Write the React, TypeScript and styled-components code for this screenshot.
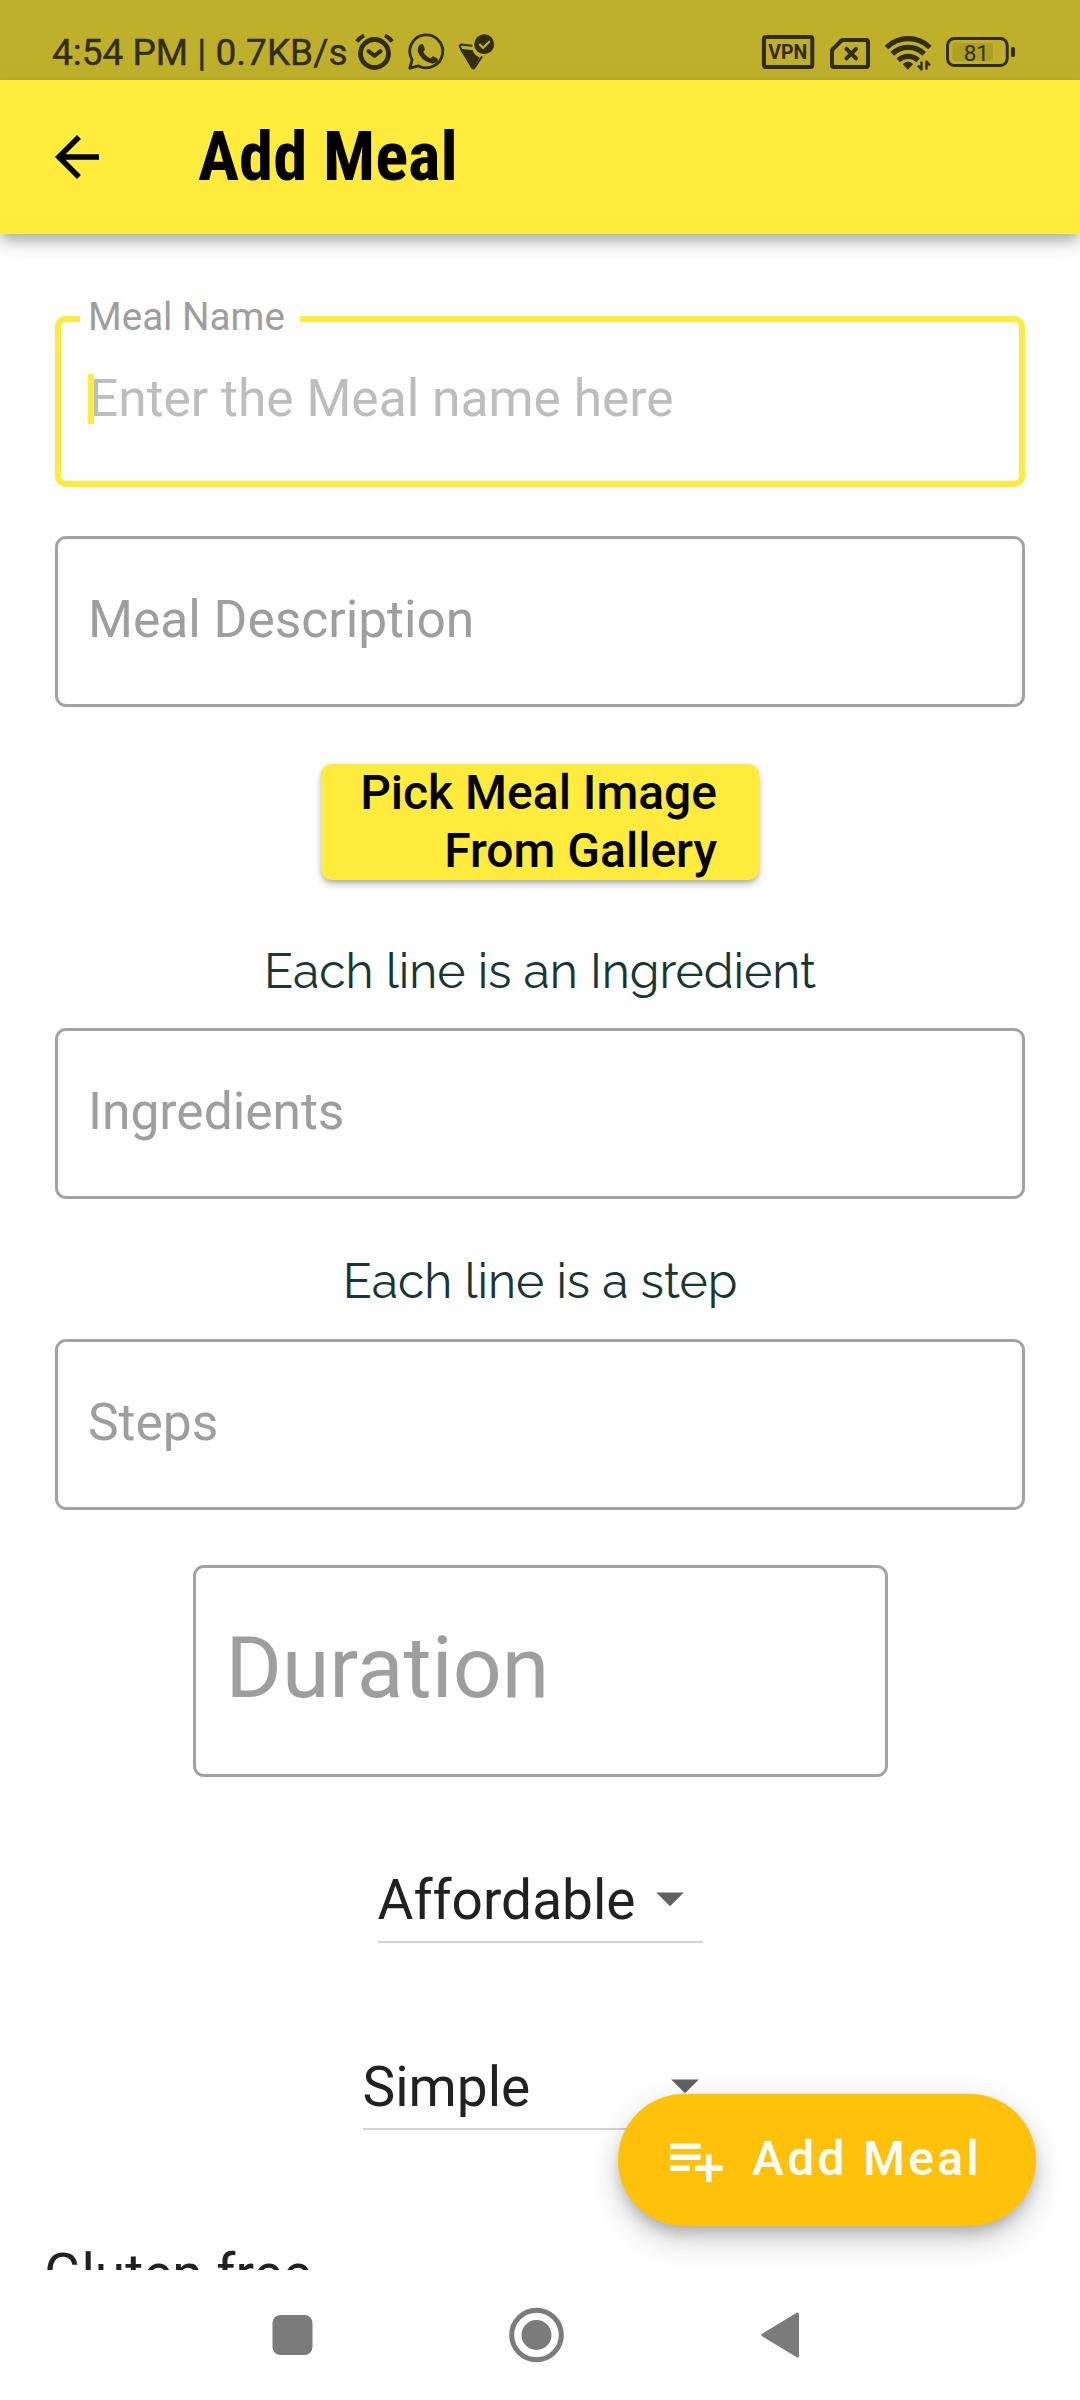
import React from "react";
import styled, { createGlobalStyle } from "styled-components";

const INK = "#322d08";

const GlobalStyle = createGlobalStyle`
  * { box-sizing: border-box; }
  body { margin: 0; background: #fefefe; font-family: Roboto, sans-serif; }
`;

const Screen = styled.div`
  width: 1080px;
  height: 2400px;
  display: flex;
  flex-direction: column;
  overflow: hidden;
  background: #fefefe;
`;

const StatusBar = styled.div`
  flex: none;
  height: 80px;
  padding: 26px 64px 0 52px;
  display: flex;
  justify-content: space-between;
  background: #bfb02c;
  color: ${INK};
`;

const StatusText = styled.span`
  width: 293px;
  font-size: 37px;
  line-height: 54px;
  font-weight: 400;
  -webkit-text-stroke: 0.4px ${INK};
  white-space: nowrap;
`;

const StatusGroup = styled.div`
  display: flex;
  height: 50px;
`;

const AppBar = styled.header`
  flex: none;
  height: 154px;
  padding: 0 44px;
  display: flex;
  align-items: center;
  gap: 88px;
  background: #ffeb3b;
  position: relative;
  z-index: 1;
  box-shadow: 0 5.5px 11px -2.75px rgba(0, 0, 0, 0.2), 0 11px 14px rgba(0, 0, 0, 0.14),
    0 2.75px 27px rgba(0, 0, 0, 0.06);
`;

const Title = styled.h1`
  margin: 0;
  font-family: "Roboto Condensed", Roboto, sans-serif;
  font-stretch: 75%;
  font-size: 68.75px;
  line-height: 80px;
  font-weight: 700;
  color: #000;
  white-space: nowrap;
`;

const Body = styled.main`
  flex: none;
  height: 2036px;
  overflow: hidden;
  display: flex;
  flex-direction: column;
  align-items: center;
  padding: 82px 55px 0;
`;

const Field = styled.div<{ $focused?: boolean; $gap?: number }>`
  flex: none;
  width: 970px;
  height: 171px;
  margin-top: ${(p) => p.$gap ?? 0}px;
  padding: ${(p) => (p.$focused ? "46px 28px" : "50px 30px")};
  border: ${(p) => (p.$focused ? "6px solid #ffeb3b" : "3px solid #a3a3a3")};
  border-radius: 11px;
  position: relative;
  font-size: 51.5px;
  line-height: 62px;
  color: ${(p) => (p.$focused ? "#bdbdbd" : "#9e9e9e")};
  white-space: nowrap;
`;

const FloatingLabel = styled.label`
  position: absolute;
  left: 19px;
  top: -28px;
  width: 220px;
  padding-left: 8px;
  background: #fefefe;
  font-size: 38.6px;
  line-height: 46px;
  color: #9e9e9e;
`;

const Caret = styled.span`
  position: absolute;
  left: 27px;
  top: 52px;
  width: 6px;
  height: 50px;
  background: #ffeb3b;
`;

const DurationField = styled(Field)`
  width: 695px;
  height: 212px;
  padding: 50px 30px;
  font-size: 86px;
  line-height: 100px;
`;

const PickButton = styled.button`
  flex: none;
  width: 438px;
  height: 116px;
  margin-top: 57px;
  padding: 0 42px 0 0;
  border: 0;
  border-radius: 11px;
  background: #ffeb3b;
  box-shadow: 0 5px 7px -1px rgba(0, 0, 0, 0.26), 0 1px 5px rgba(0, 0, 0, 0.12);
  font: 500 48px/58px Roboto, sans-serif;
  color: #000;
  text-align: right;
`;

const Hint = styled.p<{ $gap: number }>`
  flex: none;
  margin: ${(p) => p.$gap}px 0 0;
  height: 58px;
  font-family: Raleway, Lato, sans-serif;
  font-size: 48px;
  line-height: 58px;
  color: #183634;
  white-space: nowrap;
`;

const Select = styled.div<{ $width: number; $gap: number }>`
  flex: none;
  width: ${(p) => p.$width}px;
  height: 80px;
  margin-top: ${(p) => p.$gap}px;
  padding-top: 1.5px;
  display: flex;
  justify-content: space-between;
  border-bottom: 2px solid #d3d3d3;
  font-size: 55px;
  line-height: 70px;
  color: #212121;
`;

const OptionLabel = styled.div`
  flex: none;
  align-self: flex-start;
  margin: 104px 0 0 -11px;
  font-size: 55px;
  line-height: 80px;
  color: #212121;
`;

const Fab = styled.button`
  position: absolute;
  left: 618px;
  top: 2094px;
  z-index: 2;
  width: 418px;
  height: 132px;
  padding: 0 0 0 44px;
  display: flex;
  align-items: center;
  gap: 24px;
  border: 0;
  border-radius: 66px;
  background: #ffc10a;
  box-shadow: 0 8px 14px -2.75px rgba(0, 0, 0, 0.2), 0 16.5px 27.5px rgba(0, 0, 0, 0.14),
    0 2.75px 30px rgba(0, 0, 0, 0.06);
  font: 500 48px/56px Roboto, sans-serif;
  letter-spacing: 3.3px;
  color: #fff;
  white-space: nowrap;
`;

const FabLabel = styled.span`
  padding-bottom: 3px;
`;

const NavBar = styled.nav`
  flex: none;
  height: 130px;
  padding-left: 262px;
  display: flex;
  gap: 184px;
  align-items: center;
  background: #fefefe;
  color: #7b7b7b;
`;

const NavButton = styled.span<{ $w: number }>`
  display: flex;
  width: ${(p) => p.$w}px;
`;

const LeftIcons = () => (
  <svg width="150" height="50" viewBox="345 26 150 50" fill="none" stroke={INK} strokeLinecap="round" strokeLinejoin="round">
    <circle cx="374.5" cy="53.5" r="14" strokeWidth="4.8" />
    <path d="M368.5 51.2l6 4.600 6-4.600" strokeWidth="4" />
    <path d="M356.800 41.500q3-4 7.200-6M392.200 41.500q-3-4-7.200-6" strokeWidth="4" strokeLinecap="butt" />
    <path d="M409.800 68.200l2.300-8.400a16.500 16.500 0 1 1 6.400 6.100z" strokeWidth="2.800" />
    <path
      fill={INK}
      stroke="none"
      d="M419.500 45c1.500-1.700 3.300-1.200 3.800 0l1.400 3.400c.4 1-.1 1.800-1.500 3.400 2 3.600 4.500 5.500 7.600 6.800 1-1.200 1.600-2.600 2.800-2.200l3.600 1.800c1 .6.7 2.300-.2 3.400-2.200 2.500-5.200 2.400-9.400.5-4.500-2-8-6-9.400-9.600-1-2.800-.4-5.600 1.300-7.500z"
    />
    <circle cx="484.200" cy="44.300" r="10" fill={INK} stroke="none" />
    <path d="M479.800 44.600l3.300 3.300 6-6.200" stroke="#bfb02c" strokeWidth="2.200" />
    <path d="M461.500 50l10.500 1c1 3 3 5.500 6.500 7l-6 9.500z" fill={INK} strokeWidth="2" />
    <path d="M471.500 45.800l-10-1.200q-2 .2-1.600 2.200l12 20.700q1.300 1.800 2.800 0l7-10.500" strokeWidth="2" />
  </svg>
);

const RightIcons = () => (
  <svg width="255" height="50" viewBox="761 26 255 50" fill="none" stroke={INK} strokeLinecap="round" strokeLinejoin="round">
    <rect x="763.900" y="37" width="48.400" height="30" rx="2" strokeWidth="4" />
    <text x="787.800" y="59.300" textAnchor="middle" fill={INK} stroke="none" fontFamily="Roboto" fontWeight="700" fontSize="19.500">
      VPN
    </text>
    <path d="M842 40h24q2 0 2 2v23q0 2-2 2h-32q-2 0-2-2V50z" strokeWidth="4" />
    <path d="M846.500 48.800l9.500 9.500m0-9.500l-9.500 9.500" strokeWidth="4" />
    <g strokeLinecap="butt" strokeWidth="5.200">
      <path d="M886.500 47.500a31 31 0 0 1 43.400 0" />
      <path d="M892.300 53.800a22.800 22.800 0 0 1 31.800 0" />
      <path d="M898.300 60.300a14.500 14.500 0 0 1 19.800 0" />
    </g>
    <path d="M903.500 64q4.500-4 9 0l-4.500 5z" fill={INK} stroke={INK} strokeWidth="1" />
    <path d="M921.500 61.500v8l-3.500-4M926.500 69.500v-8l3.500 4" strokeWidth="2.400" strokeLinecap="butt" />
    <rect x="952.500" y="43" width="40.500" height="18" rx="2" fill="#ada023" stroke="none" />
    <rect x="947.500" y="38.500" width="59.700" height="27" rx="7" strokeWidth="3" />
    <rect x="1011" y="47" width="4" height="10" rx="1.500" fill={INK} stroke="none" />
    <text x="976.300" y="60.800" textAnchor="middle" fill={INK} stroke="none" fontFamily="Roboto" fontWeight="400" fontSize="22.500">
      81
    </text>
  </svg>
);

const BackArrow = () => (
  <svg width="66" height="66" viewBox="0 0 24 24" fill="#000">
    <path d="M20 11H7.830l5.590-5.590L12 4l-8 8 8 8 1.410-1.410L7.830 13H20v-2z" />
  </svg>
);

const DropArrow = () => (
  <svg width="66" height="66" viewBox="0 0 24 24" fill="#616161">
    <path d="M7 10l5 5 5-5z" />
  </svg>
);

const PlaylistAdd = () => (
  <svg width="66" height="66" viewBox="0 0 24 24" fill="#fff">
    <path d="M14 10H3v2h11v-2zm0-4H3v2h11V6zm4 8v-4h-2v4h-4v2h4v4h2v-4h4v-2h-4zM3 16h7v-2H3v2z" />
  </svg>
);

export default function App() {
  return (
    <>
      <GlobalStyle />
      <Screen>
        <StatusBar>
          <StatusGroup>
            <StatusText>4:54 PM | 0.7KB/s</StatusText>
            <LeftIcons />
          </StatusGroup>
          <RightIcons />
        </StatusBar>
        <AppBar>
          <BackArrow />
          <Title>Add Meal</Title>
        </AppBar>
        <Body>
          <Field $focused>
            <FloatingLabel>Meal Name</FloatingLabel>
            Enter the Meal name here
            <Caret />
          </Field>
          <Field $gap={49}>Meal Description</Field>
          <PickButton>
            Pick Meal Image
            <br />
            From Gallery
          </PickButton>
          <Hint $gap={62}>Each line is an Ingredient</Hint>
          <Field $gap={28}>Ingredients</Field>
          <Hint $gap={53}>Each line is a step</Hint>
          <Field $gap={29}>Steps</Field>
          <DurationField $gap={55}>Duration</DurationField>
          <Select $width={325} $gap={86}>
            Affordable
            <DropArrow />
          </Select>
          <Select $width={355} $gap={107}>
            Simple
            <DropArrow />
          </Select>
          <OptionLabel>Gluten free</OptionLabel>
        </Body>
        <NavBar>
          <NavButton $w={60}>
            <svg width="60" height="60" viewBox="0 0 60 60" fill="currentColor">
              <rect x="10.500" y="10" width="40" height="40" rx="8" />
            </svg>
          </NavButton>
          <NavButton $w={60}>
            <svg width="60" height="60" viewBox="0 0 60 60" fill="currentColor">
              <circle cx="30.500" cy="30" r="24.800" fill="none" stroke="currentColor" strokeWidth="5" />
              <circle cx="30.500" cy="30" r="15" />
            </svg>
          </NavButton>
          <NavButton $w={60}>
            <svg width="60" height="60" viewBox="0 0 60 60" fill="currentColor" stroke="currentColor" strokeWidth="3" strokeLinejoin="round">
              <path d="M12.800 30L47.500 9v42z" />
            </svg>
          </NavButton>
        </NavBar>
        <Fab>
          <PlaylistAdd />
          <FabLabel>Add Meal</FabLabel>
        </Fab>
      </Screen>
    </>
  );
}
